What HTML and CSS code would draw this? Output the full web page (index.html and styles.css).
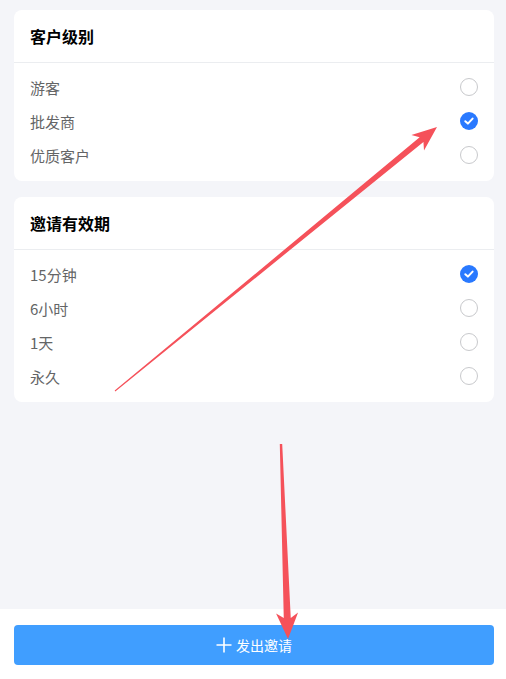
FILE: index.html
```html
<!DOCTYPE html>
<html lang="zh">
<head>
<meta charset="utf-8">
<title>发出邀请</title>
<link rel="stylesheet" href="styles.css">
</head>
<body>
<div class="page">
  <main class="content">
    <section class="card">
      <div class="card-title">客户级别</div>
      <ul class="options">
        <li class="option"><span>游客</span><span class="radio"></span></li>
        <li class="option"><span>批发商</span><span class="radio checked"><svg viewBox="0 0 18 18" width="18" height="18"><path d="M5.3 9.2 L7.9 11.6 L12.6 6.6" fill="none" stroke="#fff" stroke-width="2" stroke-linecap="round" stroke-linejoin="round"/></svg></span></li>
        <li class="option"><span>优质客户</span><span class="radio"></span></li>
      </ul>
    </section>
    <section class="card">
      <div class="card-title">邀请有效期</div>
      <ul class="options">
        <li class="option"><span>15分钟</span><span class="radio checked"><svg viewBox="0 0 18 18" width="18" height="18"><path d="M5.3 9.2 L7.9 11.6 L12.6 6.6" fill="none" stroke="#fff" stroke-width="2" stroke-linecap="round" stroke-linejoin="round"/></svg></span></li>
        <li class="option"><span>6小时</span><span class="radio"></span></li>
        <li class="option"><span>1天</span><span class="radio"></span></li>
        <li class="option"><span>永久</span><span class="radio"></span></li>
      </ul>
    </section>
  </main>
  <footer class="footer">
    <button class="invite-btn" type="button">
      <svg class="plus" viewBox="0 0 16 16" width="16" height="16"><path d="M8 0.5 V15.5 M0.5 8 H15.5" stroke="#fff" stroke-width="1.6" fill="none"/></svg>
      <span>发出邀请</span>
    </button>
  </footer>
</div>
<svg class="arrows" viewBox="0 0 506 679" width="506" height="679">
  <polygon fill="#f5515a" points="437,127 424.0,150.6 423.44,142.0 115.32,391.39 114.68,390.61 419.64,137.36 411.4,135.1"/>
  <polygon fill="#f5515a" points="288,639 276.08,613.4 283.75,618.1 279.8,444.04 282.2,443.96 290.75,617.9 298.06,612.6"/>
</svg>
</body>
</html>
```
FILE: styles.css
```css
* { box-sizing: border-box; }
html, body { margin: 0; padding: 0; }
body {
  background: #f4f5f9;
  font-family: "Noto Sans CJK SC", "Noto Sans", sans-serif;
  width: 506px;
  height: 679px;
  overflow: hidden;
  position: relative;
}
.page {
  display: flex;
  flex-direction: column;
  height: 679px;
}
.content {
  flex: 1;
  padding: 10px 12px 0 14px;
  display: flex;
  flex-direction: column;
  gap: 16px;
}
.card {
  background: #fff;
  border-radius: 8px;
}
.card-title {
  height: 53px;
  padding: 0 16px 1px;
  display: flex;
  align-items: center;
  font-size: 16px;
  font-weight: 700;
  color: #000;
  border-bottom: 1px solid #ebedf0;
}
.options {
  list-style: none;
  margin: 0;
  padding: 7px 16px 9px;
}
.option {
  height: 34px;
  display: flex;
  align-items: center;
  justify-content: space-between;
  font-size: 15px;
  color: #646566;
}
.radio {
  width: 18px;
  height: 18px;
  border-radius: 50%;
  border: 1px solid #c8c9cc;
  display: flex;
  align-items: center;
  justify-content: center;
}
.radio.checked {
  border: none;
  background: #2979ff;
}
.footer {
  height: 70px;
  background: #fff;
  padding: 16px 12px 14px 14px;
}
.invite-btn {
  width: 100%;
  height: 40px;
  border: none;
  border-radius: 4px;
  background: #409eff;
  color: #fff;
  font-family: "Noto Sans CJK SC", "Noto Sans", sans-serif;
  font-size: 14px;
  display: flex;
  align-items: center;
  justify-content: center;
  gap: 4px;
  padding: 0;
}
.plus { display: block; }
.arrows {
  position: absolute;
  left: 0;
  top: 0;
  pointer-events: none;
}
```
